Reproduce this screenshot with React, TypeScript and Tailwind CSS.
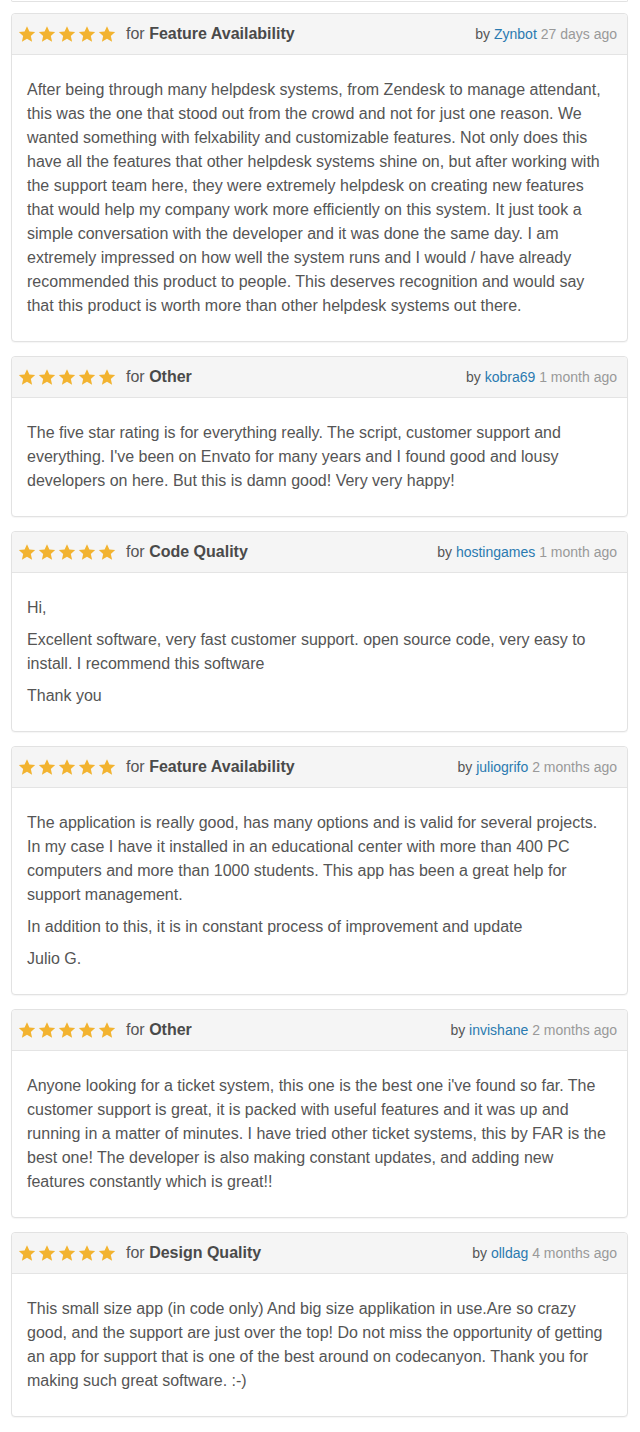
import React from "react";

type Review = {
  category: string;
  author: string;
  ago: string;
  paragraphs: string[];
};

const reviews: Review[] = [
  {
    category: "Feature Availability",
    author: "Zynbot",
    ago: "27 days ago",
    paragraphs: [
      "After being through many helpdesk systems, from Zendesk to manage attendant, this was the one that stood out from the crowd and not for just one reason. We wanted something with felxability and customizable features. Not only does this have all the features that other helpdesk systems shine on, but after working with the support team here, they were extremely helpdesk on creating new features that would help my company work more efficiently on this system. It just took a simple conversation with the developer and it was done the same day. I am extremely impressed on how well the system runs and I would / have already recommended this product to people. This deserves recognition and would say that this product is worth more than other helpdesk systems out there.",
    ],
  },
  {
    category: "Other",
    author: "kobra69",
    ago: "1 month ago",
    paragraphs: [
      "The five star rating is for everything really. The script, customer support and everything. I've been on Envato for many years and I found good and lousy developers on here. But this is damn good! Very very happy!",
    ],
  },
  {
    category: "Code Quality",
    author: "hostingames",
    ago: "1 month ago",
    paragraphs: [
      "Hi,",
      "Excellent software, very fast customer support. open source code, very easy to install. I recommend this software",
      "Thank you",
    ],
  },
  {
    category: "Feature Availability",
    author: "juliogrifo",
    ago: "2 months ago",
    paragraphs: [
      "The application is really good, has many options and is valid for several projects. In my case I have it installed in an educational center with more than 400 PC computers and more than 1000 students. This app has been a great help for support management.",
      "In addition to this, it is in constant process of improvement and update",
      "Julio G.",
    ],
  },
  {
    category: "Other",
    author: "invishane",
    ago: "2 months ago",
    paragraphs: [
      "Anyone looking for a ticket system, this one is the best one i've found so far. The customer support is great, it is packed with useful features and it was up and running in a matter of minutes. I have tried other ticket systems, this by FAR is the best one! The developer is also making constant updates, and adding new features constantly which is great!!",
    ],
  },
  {
    category: "Design Quality",
    author: "olldag",
    ago: "4 months ago",
    paragraphs: [
      "This small size app (in code only) And big size applikation in use.Are so crazy good, and the support are just over the top! Do not miss the opportunity of getting an app for support that is one of the best around on codecanyon. Thank you for making such great software. :-)",
    ],
  },
];

function Star() {
  return (
    <svg width="18" height="18" viewBox="0 0 24 24" className="shrink-0">
      <path
        d="M12 1.6l3.2 7.1 7.7.7-5.8 5.2 1.7 7.6L12 18.3l-6.8 3.9 1.7-7.6L1.1 9.4l7.7-.7z"
        fill="#f2b330"
      />
    </svg>
  );
}

function Card({ r }: { r: Review }) {
  return (
    <div className="mt-[14px] ml-[11px] w-[617px] rounded-[4px] border border-[#e2e2e2] bg-white shadow-[0_1px_1px_rgba(0,0,0,0.04)]">
      <div className="flex h-[41px] items-center justify-between rounded-t-[4px] border-b border-[#e4e4e4] bg-[#f5f5f5] pl-[6px] pr-[10px]">
        <div className="flex items-center">
          <div className="flex items-center gap-[2px]">
            <Star />
            <Star />
            <Star />
            <Star />
            <Star />
          </div>
          <span className="ml-[10px] text-[16px] text-[#555]">
            for <span className="font-bold text-[#4a4a4a]">{r.category}</span>
          </span>
        </div>
        <div className="text-[14px] text-[#555]">
          by <span className="text-[#2a7ab0]">{r.author}</span>{" "}
          <span className="text-[#999]">{r.ago}</span>
        </div>
      </div>
      <div className="flex flex-col gap-[8px] pl-[15px] pr-[16px] pt-[23px] pb-[23px] text-[16px] leading-[24px] text-[#555]">
        {r.paragraphs.map((p, i) => (
          <p key={i}>{p}</p>
        ))}
      </div>
    </div>
  );
}

export default function App() {
  return (
    <div
      className="min-h-[1432px] w-[640px] bg-white pb-[14px]"
      style={{ fontFamily: '"Liberation Sans", Arial, sans-serif' }}
    >
      <div className="ml-[11px] h-[2px] w-[617px] rounded-b-[4px] border border-t-0 border-[#e2e2e2]" />
      <div className="-mt-[3px]">
        {reviews.map((r, i) => (
          <Card key={i} r={r} />
        ))}
      </div>
    </div>
  );
}
